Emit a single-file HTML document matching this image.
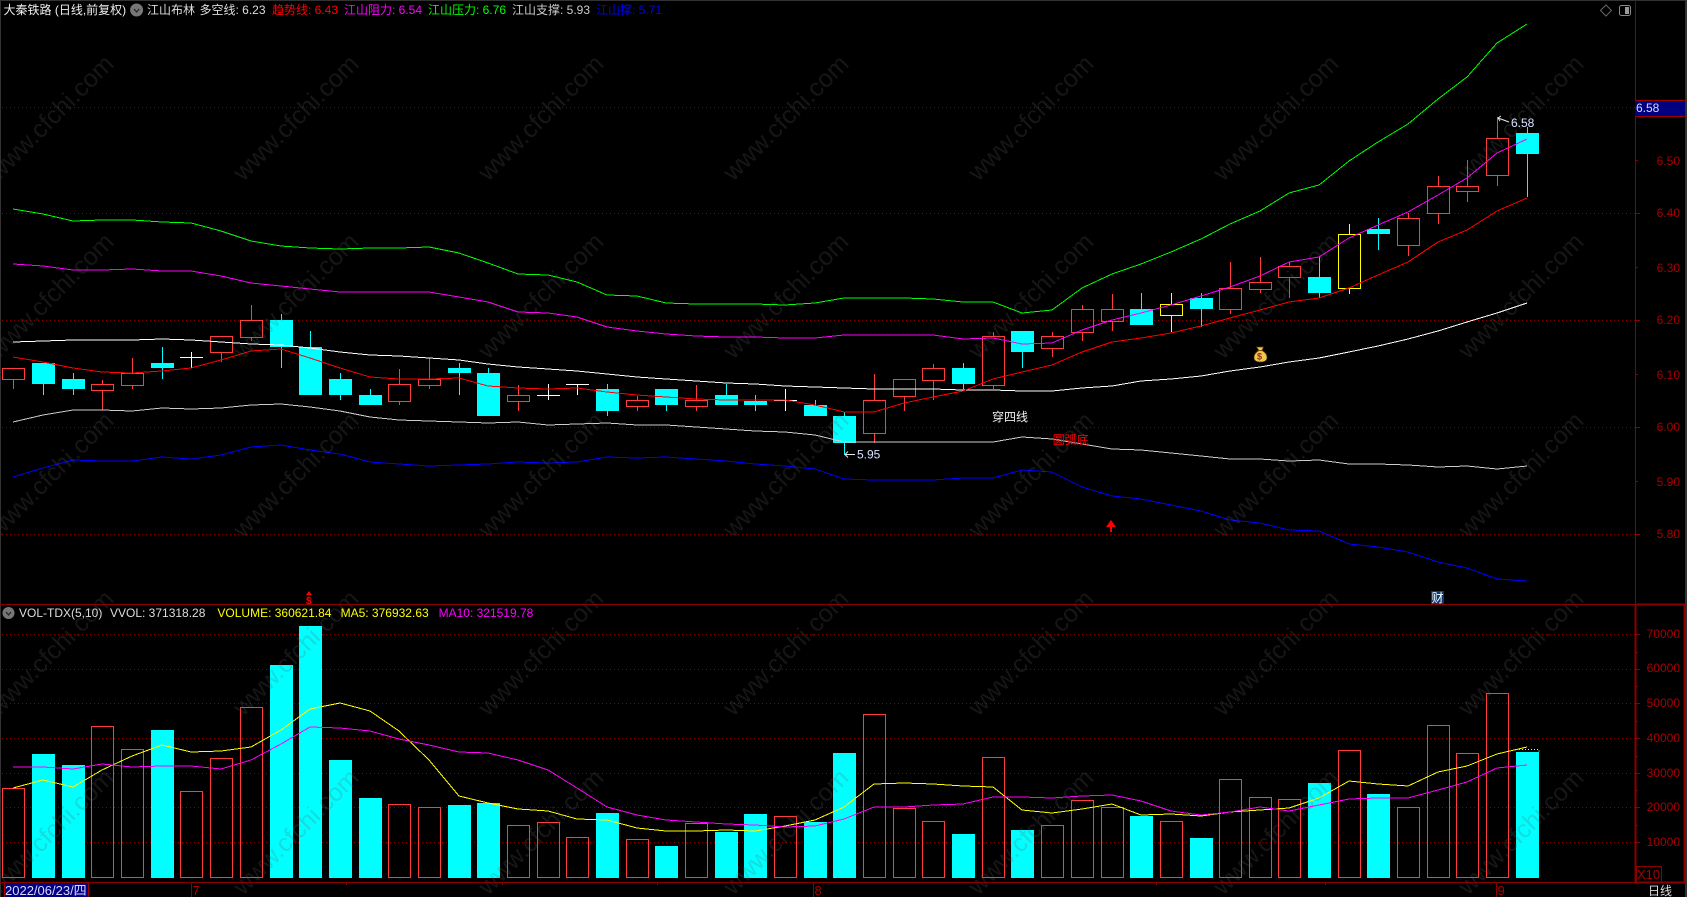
<!DOCTYPE html>
<html><head><meta charset="utf-8"><title>大秦铁路</title>
<style>
html,body{margin:0;padding:0;background:#000;width:1687px;height:897px;overflow:hidden}
svg{display:block;position:absolute;left:0;top:0}
text{font-family:"Liberation Sans","Noto Sans CJK SC",sans-serif;font-size:12px;white-space:pre}
.wm text{font-size:25px;fill:rgba(100,100,100,.22);text-anchor:middle}
.ax text{fill:#a80000;text-anchor:end}
polyline{fill:none;stroke-width:1;shape-rendering:crispEdges}
.c path{shape-rendering:crispEdges}
</style></head><body>
<svg width="1687" height="897" viewBox="0 0 1687 897" xmlns="http://www.w3.org/2000/svg">
<rect width="1687" height="897" fill="#000"/>
<!-- grid -->
<g stroke="#8a0000" stroke-dasharray="1 3" shape-rendering="crispEdges" fill="none">
<path d="M2 107.5H1635M2 213.5H1635M2 320.5H1635M2 427.5H1635M2 534.5H1635"/>
<path d="M2 634.5H1635M2 669.5H1635M2 703.5H1635M2 738.5H1635M2 773.5H1635M2 807.5H1635M2 842.5H1635"/>
</g>
<!-- candles -->
<g class="c">
<path fill="none" stroke="#ff3c3c" d="M13.5 379V389M2.5 368.5h22v11h-22z
M102.5 380V384M102.5 390V410M91.5 384.5h22v6h-22z
M132.5 358V373M132.5 385V389M121.5 373.5h22v12h-22z
M221.5 352V362M210.5 336.5h22v16h-22z
M251.5 305V320M251.5 337V341M240.5 320.5h22v17h-22z
M399.5 369V384M399.5 401V405M388.5 384.5h22v17h-22z
M429.5 358V379M429.5 385V389M418.5 379.5h22v6h-22z
M518.5 385V395M518.5 401V411M507.5 395.5h22v6h-22z
M637.5 396V400M637.5 406V411M626.5 400.5h22v6h-22z
M696.5 385V400M696.5 406V411M685.5 400.5h22v6h-22z
M874.5 374V400M874.5 433V443M863.5 400.5h22v33h-22z
M904.5 396V411M893.5 379.5h22v17h-22z
M933.5 364V368M933.5 380V400M922.5 368.5h22v12h-22z
M993.5 332V336M993.5 385V389M982.5 336.5h22v49h-22z
M1052.5 332V336M1052.5 348V357M1041.5 336.5h22v12h-22z
M1082.5 305V309M1082.5 332V341M1071.5 309.5h22v23h-22z
M1112.5 294V309M1112.5 321V331M1101.5 309.5h22v12h-22z
M1230.5 262V288M1230.5 309V314M1219.5 288.5h22v21h-22z
M1260.5 257V282M1260.5 289V293M1249.5 282.5h22v7h-22z
M1289.5 262V266M1289.5 277V298M1278.5 266.5h22v11h-22z
M1408.5 213V218M1408.5 245V256M1397.5 218.5h22v27h-22z
M1438.5 176V186M1438.5 213V224M1427.5 186.5h22v27h-22z
M1467.5 160V186M1467.5 191V202M1456.5 186.5h22v5h-22z
M1497.5 117V138M1497.5 175V186M1486.5 138.5h22v37h-22z"/>
<path fill="none" stroke="#ffff00" d="M1171.5 293V304M1171.5 315V332M1160.5 304.5h22v11h-22z
M1349.5 224V234M1349.5 288V294M1338.5 234.5h22v54h-22z"/>
<path fill="none" stroke="#00ffff" d="M43.5 384V395M73.5 373V395M162.5 347V379M281.5 314V368M310.5 331V347M340.5 373V400M370.5 389V395M459.5 363V395M488.5 368V373M607.5 384V416M666.5 405V411M726.5 384V395M755.5 395V411M815.5 400V405M844.5 412V455M963.5 363V389M1022.5 352V368M1141.5 293V309M1201.5 293V327M1319.5 257V298M1378.5 218V250M1527.5 127V197"/>
<path fill="#00ffff" d="M32 363h23v21h-23zM62 379h23v10h-23zM151 363h23v5h-23zM270 320h23v27h-23zM299 347h23v48h-23zM329 379h23v16h-23zM359 395h23v10h-23zM448 368h23v5h-23zM477 373h23v43h-23zM596 389h23v22h-23zM655 389h23v16h-23zM715 395h23v10h-23zM744 401h23v4h-23zM804 405h23v11h-23zM833 416h23v27h-23zM952 368h23v16h-23zM1011 331h23v21h-23zM1130 309h23v16h-23zM1190 298h23v11h-23zM1308 277h23v16h-23zM1367 229h23v5h-23zM1516 133h23v21h-23z"/>
<path fill="none" stroke="#fff" d="M180 357.5h23M191.5 352V368M537 395.5h23M548.5 384V400M566 384.5h23M577.5 384V395M774 400.5h23M785.5 389V411"/>
</g>
<!-- upper lines -->
<polyline stroke="#00ff00" points="13,209 43,214 73,221 102,220 132,220 162,222 191,223 221,231 251,241 281,246 310,248 340,249 370,248 399,248 429,247 459,253 488,263 518,274 548,275 577,282 607,295 637,296 666,303 696,304 726,304 755,304 785,305 815,303 844,298 874,298 904,298 933,299 963,302 993,302 1022,313 1052,310 1082,288 1112,274 1141,264 1171,252 1201,239 1230,224 1260,211 1289,193 1319,185 1349,161 1378,142 1408,124 1438,99 1467,77 1497,43 1527,24"/>
<polyline stroke="#ff00ff" points="13,264 43,266 73,270 102,270 132,269 162,271 191,271 221,276 251,283 281,286 310,289 340,292 370,292 399,292 429,292 459,297 488,302 518,312 548,313 577,317 607,327 637,331 666,334 696,336 726,337 755,337 785,338 815,338 844,335 874,335 904,335 933,335 963,339 993,338 1022,344 1052,343 1082,330 1112,320 1141,313 1171,305 1201,296 1230,287 1260,276 1289,262 1319,257 1349,238 1378,225 1408,212 1438,195 1467,178 1497,153 1527,139"/>
<polyline stroke="#ffffff" points="13,342 43,341 73,340 102,340 132,340 162,339 191,340 221,342 251,344 281,345 310,348 340,352 370,355 399,356 429,358 459,360 488,364 518,367 548,369 577,371 607,374 637,377 666,379 696,381 726,383 755,384 785,386 815,387 844,388 874,389 904,389 933,389 963,390 993,390 1022,391 1052,391 1082,388 1112,386 1141,381 1171,379 1201,376 1230,371 1260,367 1289,362 1319,358 1349,352 1378,346 1408,339 1438,331 1467,322 1497,313 1527,303"/>
<polyline stroke="#ff0000" points="13,357 43,362 73,368 102,372 132,373 162,371 191,368 221,360 251,351 281,349 310,358 340,368 370,377 399,379 429,379 459,378 488,386 518,388 548,389 577,388 607,392 637,395 666,397 696,399 726,400 755,400 785,400 815,405 844,412 874,412 904,403 933,397 963,391 993,379 1022,372 1052,365 1082,352 1112,342 1141,338 1171,333 1201,326 1230,318 1260,310 1289,302 1319,298 1349,288 1378,275 1408,262 1438,242 1467,230 1497,211 1527,198"/>
<polyline stroke="#cccccc" points="13,422 43,415 73,410 102,410 132,411 162,408 191,409 221,408 251,405 281,404 310,407 340,411 370,417 399,420 429,421 459,422 488,423 518,422 548,425 577,424 607,423 637,425 666,425 696,427 726,429 755,431 785,432 815,435 844,442 874,442 904,442 933,442 963,442 993,442 1022,437 1052,439 1082,444 1112,449 1141,450 1171,453 1201,456 1230,459 1260,459 1289,461 1319,460 1349,464 1378,464 1408,465 1438,467 1467,466 1497,469 1527,466"/>
<polyline stroke="#0000ff" points="13,477 43,468 73,460 102,461 132,461 162,457 191,459 221,455 251,447 281,445 310,450 340,454 370,462 399,464 429,466 459,465 488,464 518,462 548,463 577,462 607,457 637,458 666,457 696,459 726,461 755,464 785,466 815,469 844,479 874,480 904,480 933,480 963,478 993,478 1022,470 1052,472 1082,487 1112,496 1141,499 1171,505 1201,511 1230,520 1260,523 1289,530 1319,531 1349,544 1378,547 1408,552 1438,562 1467,568 1497,579 1527,581"/>
<!-- volume bars -->
<g class="c">
<path fill="none" stroke="#ff3c3c" d="M2.5 788.5h22V877.5h-22zM91.5 726.5h22V877.5h-22zM121.5 749.5h22V877.5h-22zM180.5 791.5h22V877.5h-22zM210.5 758.5h22V877.5h-22zM240.5 707.5h22V877.5h-22zM388.5 804.5h22V877.5h-22zM418.5 807.5h22V877.5h-22zM507.5 825.5h22V877.5h-22zM537.5 822.5h22V877.5h-22zM566.5 837.5h22V877.5h-22zM626.5 839.5h22V877.5h-22zM685.5 823.5h22V877.5h-22zM774.5 816.5h22V877.5h-22zM863.5 714.5h22V877.5h-22zM893.5 808.5h22V877.5h-22zM922.5 821.5h22V877.5h-22zM982.5 757.5h22V877.5h-22zM1041.5 825.5h22V877.5h-22zM1071.5 800.5h22V877.5h-22zM1101.5 807.5h22V877.5h-22zM1160.5 821.5h22V877.5h-22zM1219.5 779.5h22V877.5h-22zM1249.5 797.5h22V877.5h-22zM1278.5 799.5h22V877.5h-22zM1338.5 750.5h22V877.5h-22zM1397.5 807.5h22V877.5h-22zM1427.5 725.5h22V877.5h-22zM1456.5 753.5h22V877.5h-22zM1486.5 693.5h22V877.5h-22z"/>
<path fill="#00ffff" d="M32 754h23V878h-23zM62 765h23V878h-23zM151 730h23V878h-23zM270 665h23V878h-23zM299 626h23V878h-23zM329 760h23V878h-23zM359 798h23V878h-23zM448 805h23V878h-23zM477 803h23V878h-23zM596 813h23V878h-23zM655 846h23V878h-23zM715 832h23V878h-23zM744 814h23V878h-23zM804 822h23V878h-23zM833 753h23V878h-23zM952 834h23V878h-23zM1011 830h23V878h-23zM1130 816h23V878h-23zM1190 838h23V878h-23zM1308 783h23V878h-23zM1367 794h23V878h-23zM1516 752h23V878h-23z"/>
</g>
<polyline stroke="#ffff00" points="13,788 43,780 73,787 102,770 132,756 162,745 191,752 221,751 251,747 281,730 310,709 340,703 370,711 399,731 429,760 459,796 488,803 518,809 548,811 577,819 607,820 637,828 666,831 696,831 726,830 755,831 785,826 815,820 844,807 874,784 904,783 933,784 963,786 993,787 1022,810 1052,813 1082,809 1112,804 1141,815 1171,814 1201,816 1230,812 1260,810 1289,808 1319,798 1349,781 1378,784 1408,786 1438,772 1467,766 1497,754 1527,747"/>
<polyline stroke="#ff00ff" points="13,767 43,767 73,769 102,764 132,767 162,766 191,766 221,769 251,760 281,744 310,727 340,728 370,731 399,739 429,745 459,752 488,753 518,760 548,770 577,788 607,807 637,815 666,820 696,822 726,824 755,825 785,827 815,826 844,819 874,807 904,807 933,805 963,804 993,797 1022,797 1052,798 1082,796 1112,795 1141,801 1171,811 1201,815 1230,812 1260,807 1289,811 1319,805 1349,799 1378,798 1408,798 1438,790 1467,782 1497,768 1527,765"/>
<path d="M1516 749.5H1539V752" fill="none" stroke="#ffff00" stroke-dasharray="1 2" shape-rendering="crispEdges"/>
<!-- watermark -->
<g class="wm">
<text x="51" y="126" transform="rotate(-45 51 118)">www.cfchi.com</text><text x="296" y="126" transform="rotate(-45 296 118)">www.cfchi.com</text><text x="541" y="126" transform="rotate(-45 541 118)">www.cfchi.com</text><text x="786" y="126" transform="rotate(-45 786 118)">www.cfchi.com</text><text x="1031" y="126" transform="rotate(-45 1031 118)">www.cfchi.com</text><text x="1276" y="126" transform="rotate(-45 1276 118)">www.cfchi.com</text><text x="1521" y="126" transform="rotate(-45 1521 118)">www.cfchi.com</text>
<text x="51" y="304" transform="rotate(-45 51 296)">www.cfchi.com</text><text x="296" y="304" transform="rotate(-45 296 296)">www.cfchi.com</text><text x="541" y="304" transform="rotate(-45 541 296)">www.cfchi.com</text><text x="786" y="304" transform="rotate(-45 786 296)">www.cfchi.com</text><text x="1031" y="304" transform="rotate(-45 1031 296)">www.cfchi.com</text><text x="1276" y="304" transform="rotate(-45 1276 296)">www.cfchi.com</text><text x="1521" y="304" transform="rotate(-45 1521 296)">www.cfchi.com</text>
<text x="51" y="483" transform="rotate(-45 51 475)">www.cfchi.com</text><text x="296" y="483" transform="rotate(-45 296 475)">www.cfchi.com</text><text x="541" y="483" transform="rotate(-45 541 475)">www.cfchi.com</text><text x="786" y="483" transform="rotate(-45 786 475)">www.cfchi.com</text><text x="1031" y="483" transform="rotate(-45 1031 475)">www.cfchi.com</text><text x="1276" y="483" transform="rotate(-45 1276 475)">www.cfchi.com</text><text x="1521" y="483" transform="rotate(-45 1521 475)">www.cfchi.com</text>
<text x="51" y="661" transform="rotate(-45 51 653)">www.cfchi.com</text><text x="296" y="661" transform="rotate(-45 296 653)">www.cfchi.com</text><text x="541" y="661" transform="rotate(-45 541 653)">www.cfchi.com</text><text x="786" y="661" transform="rotate(-45 786 653)">www.cfchi.com</text><text x="1031" y="661" transform="rotate(-45 1031 653)">www.cfchi.com</text><text x="1276" y="661" transform="rotate(-45 1276 653)">www.cfchi.com</text><text x="1521" y="661" transform="rotate(-45 1521 653)">www.cfchi.com</text>
<text x="51" y="840" transform="rotate(-45 51 832)">www.cfchi.com</text><text x="296" y="840" transform="rotate(-45 296 832)">www.cfchi.com</text><text x="541" y="840" transform="rotate(-45 541 832)">www.cfchi.com</text><text x="786" y="840" transform="rotate(-45 786 832)">www.cfchi.com</text><text x="1031" y="840" transform="rotate(-45 1031 832)">www.cfchi.com</text><text x="1276" y="840" transform="rotate(-45 1276 832)">www.cfchi.com</text><text x="1521" y="840" transform="rotate(-45 1521 832)">www.cfchi.com</text>
</g>
<!-- frame -->
<g fill="none" shape-rendering="crispEdges">
<path d="M0.5 0V897M0 0.5H1687M1685.5 0V897M1686.5 0V897" stroke="#333"/>
<path d="M1635.5 0V604M0 604.5H1635M0 882.5H1635" stroke="#8a0000"/>
<rect x="1635.5" y="604.5" width="49" height="278" stroke="#8a0000" stroke-width="2"/>
<path d="M1635 107.5h5M1635 160.5h3M1635 213.5h5M1635 267.5h3M1635 320.5h5M1635 374.5h3M1635 427.5h5M1635 481.5h3M1635 534.5h5M1635 634.5h5M1635 652.5h3M1635 669.5h5M1635 686.5h3M1635 703.5h5M1635 721.5h3M1635 738.5h5M1635 756.5h3M1635 773.5h5M1635 790.5h3M1635 807.5h5M1635 825.5h3M1635 842.5h5" stroke="#8a0000"/>
<path d="M191.5 882V897M813.5 882V897M1496.5 882V897M346.5 882v3M502.5 882v3M657.5 882v3M1156.5 882v3M1325.5 882v3" stroke="#8a0000"/>
<rect x="1636.5" y="866.5" width="25" height="15.5" stroke="#8a0000"/>
</g>
<!-- axis labels -->
<g class="ax">
<text x="1680" y="165">6.50</text><text x="1680" y="217">6.40</text><text x="1680" y="272">6.30</text><text x="1680" y="324">6.20</text><text x="1680" y="379">6.10</text><text x="1680" y="431">6.00</text><text x="1680" y="486">5.90</text><text x="1680" y="538">5.80</text>
<text x="1680" y="638">70000</text><text x="1680" y="672">60000</text><text x="1680" y="707">50000</text><text x="1680" y="742">40000</text><text x="1680" y="777">30000</text><text x="1680" y="811">20000</text><text x="1680" y="846">10000</text>
</g>
<rect x="1635" y="100" width="50" height="16" fill="#000080"/>
<path d="M1635 100.5H1685M1635 116.5H1685" stroke="#a00000" shape-rendering="crispEdges"/>
<text x="1636" y="112" fill="#d8d8ff">6.58</text>
<text x="1637" y="879" fill="#a80000" style="font-size:13px">X10</text>
<text x="1648" y="895" fill="#ddd">日线</text>
<!-- header -->
<text x="3.5" y="14" fill="#eee">大秦铁路 (日线,前复权)</text>
<circle cx="136.6" cy="10" r="6.5" fill="#777"/><path d="M134 9l2.6 3 2.6-3" fill="none" stroke="#222" stroke-width="1.2"/>
<text x="147" y="14" fill="#ddd">江山布林</text>
<text x="199.5" y="14" fill="#ddd">多空线: 6.23</text>
<text x="272" y="14" fill="#ff0000">趋势线: 6.43</text>
<text x="344" y="14" fill="#ff00ff">江山阻力: 6.54</text>
<text x="428" y="14" fill="#00ff00">江山压力: 6.76</text>
<text x="512" y="14" fill="#ccc">江山支撑: 5.93</text>
<text x="596" y="14" fill="#0000ff">江山撑: 5.71</text>
<path d="M1606 5l5.5 5.5-5.5 5.5-5.5-5.5z" fill="none" stroke="#666"/>
<rect x="1619.5" y="5.5" width="11" height="10" rx="2" fill="none" stroke="#888"/><rect x="1625" y="7" width="4" height="7" fill="#999"/>
<!-- vol header -->
<circle cx="8.5" cy="613" r="6" fill="#777"/><path d="M6 612l2.5 3 2.5-3" fill="none" stroke="#222" stroke-width="1.2"/>
<text x="19" y="617" fill="#ddd">VOL-TDX(5,10)</text>
<text x="110" y="617" fill="#ddd">VVOL: 371318.28</text>
<text x="217.4" y="617" fill="#ffff00">VOLUME: 360621.84</text>
<text x="340.6" y="617" fill="#ffff00">MA5: 376932.63</text>
<text x="438.6" y="617" fill="#ff00ff">MA10: 321519.78</text>
<!-- bottom -->
<rect x="4" y="883" width="85" height="14" fill="#000080"/>
<path d="M4.5 883V897M88.5 883V897" stroke="#a00000" shape-rendering="crispEdges"/>
<text x="5" y="895" fill="#d8d8ff" style="font-size:13px">2022/06/23/四</text>
<text x="192.5" y="895" fill="#a80000" style="font-size:13px">7</text>
<text x="814.5" y="895" fill="#a80000" style="font-size:13px">8</text>
<text x="1497.5" y="895" fill="#a80000" style="font-size:13px">9</text>
<!-- annotations -->
<path d="M855 454.5H845M848 451.5l-3 3 3 3" fill="none" stroke="#e8e8e8"/>
<text x="857" y="458.5" fill="#d8e0ff">5.95</text>
<path d="M1509 122L1498 118M1501 116l-3 2 2 3" fill="none" stroke="#e8e8e8"/>
<text x="1511" y="127" fill="#d8e0ff">6.58</text>
<text x="992" y="421" fill="#eee">穿四线</text>
<text x="1052.7" y="444" fill="#ff0000">圆弧底</text>
<path d="M1111 520l5 7h-4v5h-2v-5h-4z" fill="#ff0000"/>
<!-- money bag -->
<g>
<path d="M1256.5 347h7l-1.5 3.5c3 1.5 5 4 5 7 0 3.5-3 4.5-6.500 4.500s-6.500-1-6.500-4.500c0-3 2-5.500 5-7z" fill="#f2c84a" stroke="#5a3a10" stroke-width=".7"/>
<path d="M1257.5 350.500h5" stroke="#7a4a10"/>
<text x="1257" y="359.5" fill="#8a2a20" style="font-size:9px;font-weight:bold">$</text>
</g>
<path d="M309 591l3 4h-6z" fill="#ff0000"/>
<text x="306" y="604" fill="#ff0000" style="font-size:10px;font-weight:bold">$</text>
<rect x="1431" y="591" width="13" height="13" fill="#0a3a70"/>
<text x="1431.5" y="602" fill="#fff">财</text>
</svg>
</body></html>
